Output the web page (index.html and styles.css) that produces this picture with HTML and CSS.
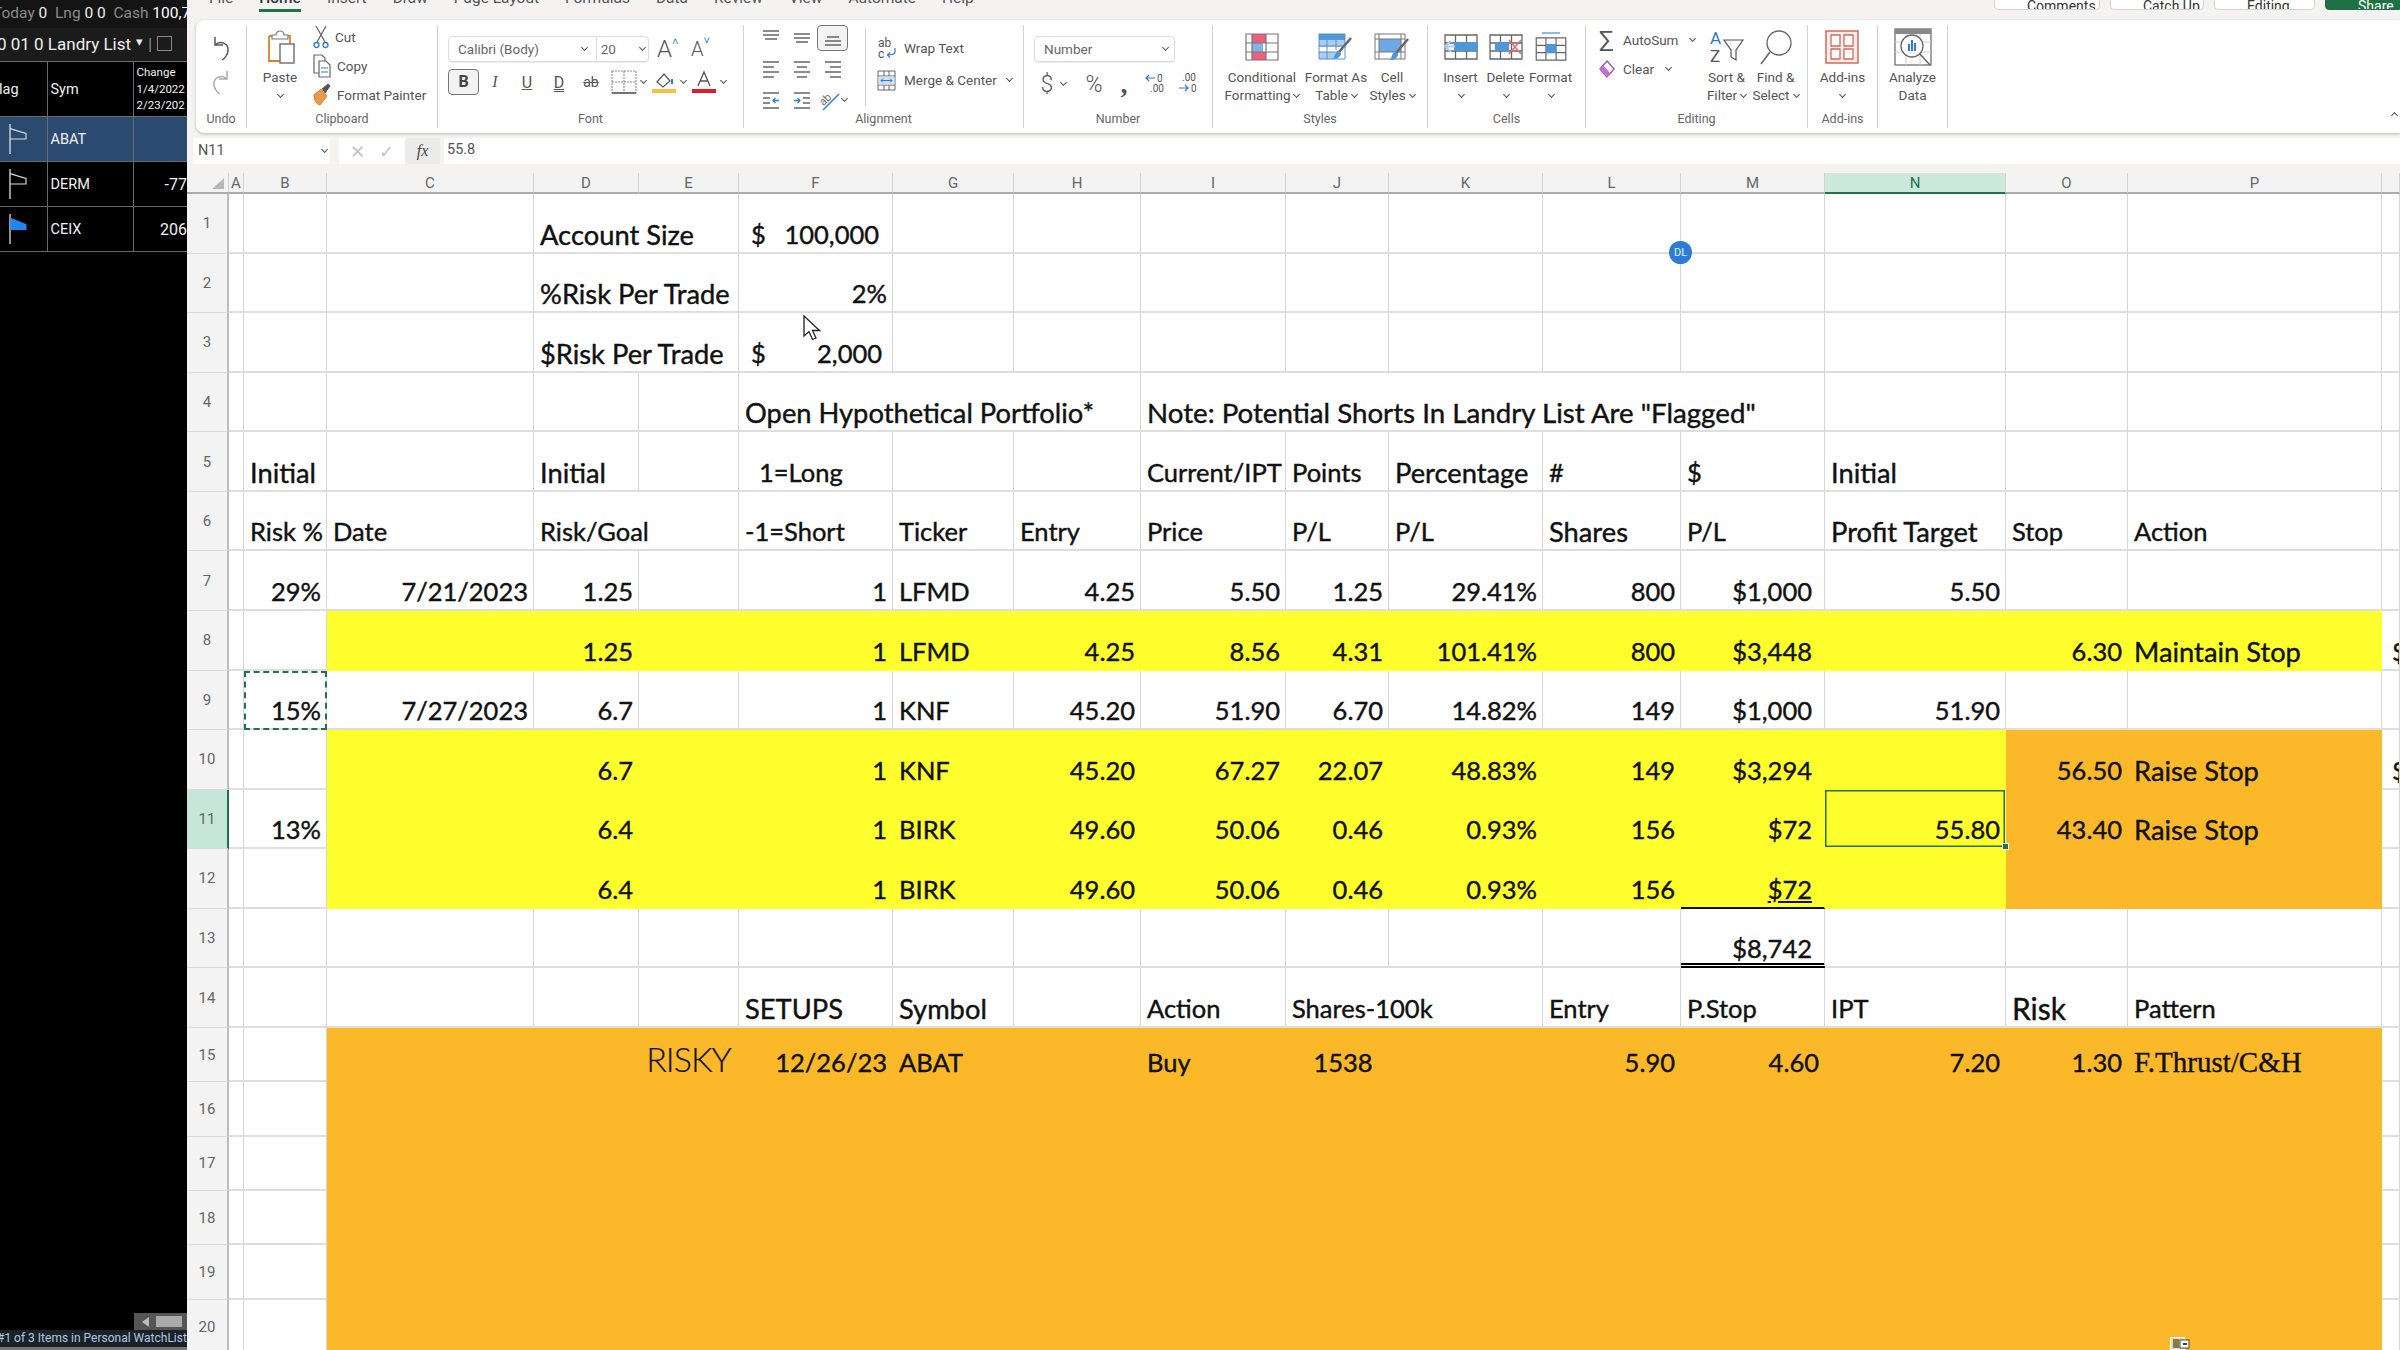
FILE: index.html
```html
<!DOCTYPE html>
<html lang="en">
<head>
  <meta charset="UTF-8" />
  <title>Landry List - Excel</title>
  <link rel="stylesheet" href="styles.css">
</head>
<body>
  <svg class="defs" width="0" height="0">
    <symbol id="flag" viewBox="0 0 20 34"><path d="M1.5 1v32" stroke="#ddd" stroke-width="1.4" fill="none"/><path d="M1.5 6l17 5v6h-17" stroke="#ddd" stroke-width="1.2" fill="none"/></symbol>
    <symbol id="al-top" viewBox="0 0 20 20"><path d="M2 3h16M2 7h16M4 11h12" stroke="#666" stroke-width="1.3"/></symbol>
    <symbol id="al-mid" viewBox="0 0 20 20"><path d="M2 6h16M2 10h16M4 14h12" stroke="#666" stroke-width="1.3"/></symbol>
    <symbol id="al-bot" viewBox="0 0 20 20"><path d="M4 9h12M2 13h16M2 17h16" stroke="#666" stroke-width="1.3"/></symbol>
    <symbol id="al-left" viewBox="0 0 20 20"><path d="M2 3h16M2 8h11M2 13h16M2 18h11" stroke="#666" stroke-width="1.3"/></symbol>
    <symbol id="al-center" viewBox="0 0 20 20"><path d="M2 3h16M5 8h10M2 13h16M5 18h10" stroke="#666" stroke-width="1.3"/></symbol>
    <symbol id="al-right" viewBox="0 0 20 20"><path d="M2 3h16M7 8h11M2 13h16M7 18h11" stroke="#666" stroke-width="1.3"/></symbol>
    <symbol id="ind-dec" viewBox="0 0 20 20"><path d="M2 3h16M2 8h7M2 13h7M2 18h16" stroke="#666" stroke-width="1.3"/><path d="M18 10.500h-6M14.500 8l-2.500 2.500 2.500 2.500" stroke="#2b7cd3" stroke-width="1.3" fill="none"/></symbol>
    <symbol id="ind-inc" viewBox="0 0 20 20"><path d="M2 3h16M11 8h7M11 13h7M2 18h16" stroke="#666" stroke-width="1.3"/><path d="M2 10.500h6M5.500 8l2.500 2.500-2.500 2.500" stroke="#2b7cd3" stroke-width="1.3" fill="none"/></symbol>
    <symbol id="sheet-grid" viewBox="0 0 34 26"><path d="M1 1h32v24h-32zM1 9h32M1 17h32M11.500 1v24M22.500 1v24" stroke="#666" stroke-width="1.3" fill="none"/></symbol>
  </svg>

  <aside class="watch">
    <div class="watch-stat"><span class="dim">Today</span> 0 &nbsp;<span class="dim">Lng</span> 0 0 &nbsp;<span class="dim">Cash</span> <b>100,7</b></div>
    <div class="watch-list">0 01 0 Landry List <span class="caret">▾</span> <span class="dim">|</span> <span class="box"></span></div>
    <table class="watch-table">
      <tr class="head"><td class="flagcol"><span class="cut">Flag</span></td><td class="symcol">Sym</td><td class="chg">Change<br>1/4/2022<br>2/23/202</td></tr>
      <tr class="on"><td class="flagcol"><svg class="flag"><use href="#flag"/></svg></td><td class="symcol">ABAT</td><td class="val"></td></tr>
      <tr><td class="flagcol"><svg class="flag"><use href="#flag"/></svg></td><td class="symcol">DERM</td><td class="val">-77</td></tr>
      <tr><td class="flagcol"><svg class="flag" viewBox="0 0 20 34"><path d="M1.500 1v32" stroke="#ddd" stroke-width="1.4"/><path d="M2 5l17 7v6h-17z" fill="#1e88f0"/></svg></td><td class="symcol">CEIX</td><td class="val">206</td></tr>
    </table>
    <div class="watch-foot">
      <div class="scroll"><i class="arrow"></i><i class="thumb"></i></div>
      <div class="status">#1 of 3 Items in Personal WatchList</div>
    </div>
  </aside>

  <main class="excel">
    <header class="tabs">
      <nav class="tablist">
        <span>File</span><span class="active">Home</span><span>Insert</span><span>Draw</span><span>Page Layout</span><span>Formulas</span><span>Data</span><span>Review</span><span>View</span><span>Automate</span><span>Help</span>
      </nav>
      <div class="tab-btns">
        <span class="tbtn w106">Comments</span><span class="tbtn w94">Catch Up</span><span class="tbtn w101">Editing</span><span class="tbtn share">Share</span>
      </div>
    </header>

    <section class="ribbon">
      <div class="group w-undo">
        <div class="body stack center">
          <svg width="22" height="28" viewBox="0 0 22 28"><path d="M5 3v8h8M5 11c5-5 14-2 13 6-.5 4-3 7-6 9" stroke="#555" stroke-width="1.500" fill="none"/></svg>
          <svg class="faded" width="22" height="28" viewBox="0 0 22 28"><path d="M17 3v8h-8M17 11c-5-5-14-2-13 6 .5 4 3 7 6 9" stroke="#aaa" stroke-width="1.500" fill="none"/></svg>
        </div>
        <div class="label">Undo</div>
      </div>

      <div class="group w-clip">
        <div class="body row">
          <div class="big w-paste">
            <svg width="32" height="36" viewBox="0 0 32 36"><path d="M8 6h4a4 4 0 0 1 8 0h4v4h-16z" fill="#fff" stroke="#777" stroke-width="1.200"/><path d="M5 7h3M24 7h2v8M20 32h-15v-25" stroke="#d9822b" stroke-width="1.800" fill="none"/><rect x="16" y="15" width="14" height="19" fill="#fff" stroke="#777" stroke-width="1.500"/></svg>
            <span>Paste</span><i class="chev"></i>
          </div>
          <div class="list clip-list">
            <div class="item"><svg width="16" height="24" viewBox="0 0 16 24"><path d="M3 1l9 16M13 1l-9 16" stroke="#666" stroke-width="1.300"/><circle cx="3.500" cy="20" r="2.500" fill="none" stroke="#2b7cd3" stroke-width="1.300"/><circle cx="12.500" cy="20" r="2.500" fill="none" stroke="#2b7cd3" stroke-width="1.300"/></svg>Cut</div>
            <div class="item"><svg width="18" height="24" viewBox="0 0 18 24"><path d="M1 1h8l3 3v15h-11z" fill="#fff" stroke="#666" stroke-width="1.200"/><path d="M6 7h7l4 4v12h-11z" fill="#fff" stroke="#666" stroke-width="1.200"/><path d="M8 14h7M8 18h7" stroke="#2b7cd3"/></svg>Copy</div>
            <div class="item"><svg width="18" height="24" viewBox="0 0 18 24"><path d="M1 12l7-6 6 7-7 9c-4-1-6-5-6-10z" fill="#e89a4f" stroke="#d9822b"/><path d="M9 6l6-5 2 2-5 7" fill="#555" stroke="#555"/></svg>Format Painter</div>
          </div>
        </div>
        <div class="label">Clipboard</div>
      </div>

      <div class="group w-font">
        <div class="body stack pad-font">
          <div class="row aligned">
            <div class="combo w-fontbox"><span class="cname">Calibri (Body)</span><i class="chev"></i><span class="csep"></span><span class="csize">20</span><i class="chev"></i></div>
            <span class="grow">A<sup>˄</sup></span><span class="shrink">A<sup>˅</sup></span>
          </div>
          <div class="row aligned tools">
            <span class="tool bold-btn">B</span><span class="tool ital">I</span><span class="tool under">U</span><span class="tool dunder">D</span><span class="tool strike">ab</span>
            <svg class="tool-svg" width="26" height="24" viewBox="0 0 26 24"><path d="M1 1h24v22h-24zM13 1v22M1 12h24" stroke="#888" stroke-width="1.100" stroke-dasharray="2 1" fill="none"/><path d="M1 23h24" stroke="#555" stroke-width="1.500"/></svg><i class="chev"></i>
            <svg class="tool-svg fill-ic" width="26" height="24" viewBox="0 0 26 24"><path d="M6 12l7-8 6 7-7 6z" fill="#fff" stroke="#555" stroke-width="1.200"/><path d="M21 9v5" stroke="#2b7cd3" stroke-width="2"/><rect x="1" y="19" width="24" height="4" fill="#f5c142"/></svg><i class="chev"></i>
            <svg class="tool-svg fill-ic" width="26" height="24" viewBox="0 0 26 24"><path d="M7 16l6-14 6 14M9.500 11h7" stroke="#555" stroke-width="1.300" fill="none"/><rect x="1" y="19" width="24" height="4" fill="#e01b2f"/></svg><i class="chev"></i>
          </div>
        </div>
        <div class="label">Font</div>
      </div>

      <div class="group w-align">
        <div class="body row">
          <div class="align-grid">
            <span class="agi"><svg width="20" height="20"><use href="#al-top"/></svg></span>
            <span class="agi"><svg width="20" height="20"><use href="#al-mid"/></svg></span>
            <span class="agi sel-btn"><svg width="20" height="20"><use href="#al-bot"/></svg></span>
            <span class="agi"><svg width="20" height="20"><use href="#al-left"/></svg></span>
            <span class="agi"><svg width="20" height="20"><use href="#al-center"/></svg></span>
            <span class="agi"><svg width="20" height="20"><use href="#al-right"/></svg></span>
            <span class="agi"><svg width="20" height="20"><use href="#ind-dec"/></svg></span>
            <span class="agi"><svg width="20" height="20"><use href="#ind-inc"/></svg></span>
            <span class="agi"><svg width="22" height="24" viewBox="0 0 22 24"><text x="1" y="14" font-size="11" fill="#666" transform="rotate(-45 8 12)" font-family="Roboto, sans-serif">ab</text><path d="M4 22L20 6" stroke="#2b7cd3" stroke-width="1.400"/></svg><i class="chev"></i></span>
          </div>
          <div class="vline"></div>
          <div class="list wide">
            <div class="item"><svg width="22" height="24" viewBox="0 0 22 24"><text x="2" y="11" font-size="12" fill="#555" font-family="Roboto, sans-serif">ab</text><text x="2" y="22" font-size="12" fill="#555" font-family="Roboto, sans-serif">c</text><path d="M19 12v4c0 3-5 3-7 3M14 16.500l-2.500 2.500 2.500 2.500" stroke="#2b7cd3" stroke-width="1.200" fill="none"/></svg>Wrap Text</div>
            <div class="item"><svg width="22" height="24" viewBox="0 0 22 24"><path d="M2 3h17v19h-17zM2 8h17M2 17h17M8 3v5M13 3v5M8 17v5M13 17v5" stroke="#666" fill="none"/><rect x="2.500" y="8.500" width="16" height="8" fill="#cfe3f7"/><path d="M5 12.500h11M7 10.500l-2 2 2 2M14 10.500l2 2-2 2" stroke="#2b7cd3" fill="none"/></svg>Merge &amp; Center <i class="chev"></i></div>
          </div>
        </div>
        <div class="label">Alignment</div>
      </div>

      <div class="group w-num">
        <div class="body stack pad-font">
          <div class="combo w-numbox"><span class="cname">Number</span><i class="chev"></i></div>
          <div class="row aligned num-tools">
            <span class="nt w-dollar">$</span><i class="chev"></i><span class="nt w-pct">%</span><span class="nt w-comma">,</span>
            <span class="nt dec-btn"><svg width="26" height="24" viewBox="0 0 26 24"><path d="M11 7h-9M5 4l-3 3 3 3" stroke="#2b7cd3" stroke-width="1.200" fill="none"/><text x="13" y="11" font-size="10" fill="#555" font-family="Roboto, sans-serif">0</text><text x="6" y="21" font-size="10" fill="#555" font-family="Roboto, sans-serif">.00</text></svg></span>
            <span class="nt dec-btn"><svg width="26" height="24" viewBox="0 0 26 24"><text x="6" y="10" font-size="10" fill="#555" font-family="Roboto, sans-serif">.00</text><path d="M3 17h9M9 14l3 3-3 3" stroke="#2b7cd3" stroke-width="1.200" fill="none"/><text x="15" y="21" font-size="10" fill="#555" font-family="Roboto, sans-serif">0</text></svg></span>
          </div>
        </div>
        <div class="label">Number</div>
      </div>

      <div class="group w-styles">
        <div class="body row pad-big">
          <div class="big w78">
            <svg width="34" height="28" viewBox="0 0 34 28"><path d="M7 1h14v9h-14zM7 19h14v8h-14z" fill="#ef5f7d"/><rect x="7" y="10" width="11" height="9" fill="#7db4ea"/><path d="M1 1h32v26h-32zM1 10h32M1 19h32M7 1v26M21 1v26" stroke="#777" stroke-width="1.200" fill="none"/></svg>
            <span>Conditional</span><span>Formatting<i class="chev"></i></span>
          </div>
          <div class="big w70">
            <svg width="36" height="28" viewBox="0 0 36 28"><rect x="1" y="1" width="26" height="6" fill="#4f97dc"/><rect x="1" y="7" width="26" height="7" fill="#a9cdf2"/><rect x="1" y="19" width="16" height="7" fill="#a9cdf2"/><path d="M1 1h26v25h-26zM1 13h26M1 19h20M9 7v19M18 7v10" stroke="#5b8fc4" fill="none"/><path d="M33 5L21 19" stroke="#666" stroke-width="2.500"/><path d="M20 18c3 0 4 3 2 5-2 3-5 3-7 3 2-2 1-6 5-8z" fill="#4f97dc"/></svg>
            <span>Format As</span><span>Table<i class="chev"></i></span>
          </div>
          <div class="big w42">
            <svg width="36" height="28" viewBox="0 0 36 28"><rect x="5" y="6" width="22" height="13" fill="#6ea9e6"/><path d="M1 1h30v25h-30zM1 6h30M1 19h30M5 1v25M27 1v25" stroke="#777" fill="none"/><path d="M34 6L22 20" stroke="#666" stroke-width="2.500"/><path d="M21 19c3 0 4 3 2 5-2 3-5 3-7 3 2-2 1-6 5-8z" fill="#4f97dc"/></svg>
            <span>Cell</span><span>Styles<i class="chev"></i></span>
          </div>
        </div>
        <div class="label">Styles</div>
      </div>

      <div class="group w-cells">
        <div class="body row pad-big">
          <div class="big w45">
            <svg width="34" height="28" viewBox="0 0 34 28"><use href="#sheet-grid" width="34" height="26" y="1"/><rect x="10" y="9" width="24" height="9" fill="#4f97dc"/><path d="M11 13.500h-9M7 8l-6 5.500 6 5.500" stroke="#a9cdf2" stroke-width="1.800" fill="none"/></svg>
            <span>Insert</span><i class="chev"></i>
          </div>
          <div class="big w45">
            <svg width="34" height="28" viewBox="0 0 34 28"><use href="#sheet-grid" width="34" height="26" y="1"/><rect x="6" y="9" width="14" height="9" fill="#4f97dc"/><path d="M20 7l12 14M32 7l-12 14" stroke="#e9667b" stroke-width="1.500"/></svg>
            <span>Delete</span><i class="chev"></i>
          </div>
          <div class="big w45">
            <svg width="34" height="30" viewBox="0 0 34 30"><path d="M8 1h18" stroke="#4f97dc" stroke-width="1.300"/><use href="#sheet-grid" width="32" height="24" x="1" y="5"/><rect x="12" y="12" width="10" height="9" fill="#4f97dc"/></svg>
            <span>Format</span><i class="chev"></i>
          </div>
        </div>
        <div class="label">Cells</div>
      </div>

      <div class="group w-edit">
        <div class="body row pad-edit">
          <div class="list edit-list">
            <div class="item"><span class="sigma">∑</span>AutoSum <i class="chev"></i></div>
            <div class="item"><svg width="18" height="20" viewBox="0 0 18 20"><path d="M9 1l8 9-8 9-8-9z" fill="#fff" stroke="#a24bb5" stroke-width="1.400"/><path d="M1 10l4-4 8 9-4 4z" fill="#c071d1"/></svg>Clear <i class="chev"></i></div>
          </div>
          <div class="big w49">
            <svg width="36" height="36" viewBox="0 0 36 36"><text x="1" y="15" font-size="17" fill="#2b7cd3" font-family="Roboto, sans-serif">A</text><text x="1" y="33" font-size="17" fill="#555" font-family="Roboto, sans-serif">Z</text><path d="M15 11h19l-7 10v10l-5-3v-7z" fill="#fff" stroke="#555" stroke-width="1.200"/></svg>
            <span>Sort &amp;</span><span>Filter<i class="chev"></i></span>
          </div>
          <div class="big w49">
            <svg width="36" height="36" viewBox="0 0 36 36"><circle cx="21" cy="14" r="12" fill="none" stroke="#666" stroke-width="1.300"/><path d="M12 23L3 35" stroke="#666" stroke-width="1.500"/></svg>
            <span>Find &amp;</span><span>Select<i class="chev"></i></span>
          </div>
        </div>
        <div class="label">Editing</div>
      </div>

      <div class="group w-addin">
        <div class="body row centered">
          <div class="big">
            <svg width="34" height="36" viewBox="0 0 34 36"><rect x="1" y="2" width="32" height="32" fill="#fbeeec" stroke="#d9675a" stroke-width="1.500"/><path d="M6 6h9v11h-9zM19 6h9v11h-9zM6 20h9v10h-9zM19 20h9v10h-9z" fill="#fff" stroke="#d9675a" stroke-width="1.300"/></svg>
            <span>Add-ins</span><i class="chev"></i>
          </div>
        </div>
        <div class="label">Add-ins</div>
      </div>

      <div class="group w-addin">
        <div class="body row centered">
          <div class="big">
            <svg width="38" height="38" viewBox="0 0 38 38"><rect x="1" y="1" width="36" height="36" fill="#fff" stroke="#666" stroke-width="1.200"/><rect x="1" y="1" width="36" height="5" fill="#888"/><path d="M1 24h36M1 14h36M12 6v31M26 6v31" stroke="#ccc"/><circle cx="18" cy="18" r="11" fill="#fff" stroke="#666" stroke-width="1.300"/><path d="M14 16v7h2v-7zM17 12v11h2v-11zM20 15v8h2v-8z" fill="#2b7cd3"/><path d="M26 26l10 11" stroke="#666" stroke-width="1.500"/></svg>
            <span>Analyze</span><span>Data</span>
          </div>
        </div>
      </div>
      <i class="chev up collapse"></i>
    </section>

    <section class="formula">
      <div class="namebox">N11<i class="chev"></i></div>
      <div class="fbtns"><span class="fx-x">✕</span><span class="fx-c">✓</span></div>
      <div class="fx"><em>fx</em></div>
      <div class="finput">55.8</div>
    </section>

    <section class="sheet">
      <table class="grid">
        <colgroup>
          <col class="c-hdr"><col class="c-a"><col class="c-b"><col class="c-c"><col class="c-d"><col class="c-e"><col class="c-f"><col class="c-g"><col class="c-h"><col class="c-i"><col class="c-j"><col class="c-k"><col class="c-l"><col class="c-m"><col class="c-n"><col class="c-o"><col class="c-p"><col class="c-q">
        </colgroup>
        <tr class="cols">
          <th class="corner"><i class="tri"></i></th><th>A</th><th>B</th><th>C</th><th>D</th><th>E</th><th>F</th><th>G</th><th>H</th><th>I</th><th>J</th><th>K</th><th>L</th><th>M</th><th class="picked">N</th><th>O</th><th>P</th><th></th>
        </tr>
        <tr>
          <th>1</th><td></td><td></td><td></td><td colspan="2" class="x">Account Size</td><td class="acct"><div class="acct-in"><span>$</span><span>100,000</span></div></td><td></td><td></td><td></td><td></td><td></td><td></td><td></td><td></td><td></td><td></td><td></td>
        </tr>
        <tr>
          <th>2</th><td></td><td></td><td></td><td colspan="2" class="x">%Risk Per Trade</td><td class="n">2%</td><td></td><td></td><td></td><td></td><td></td><td></td><td></td><td></td><td></td><td></td><td></td>
        </tr>
        <tr>
          <th>3</th><td></td><td></td><td></td><td colspan="2" class="x">$Risk Per Trade</td><td class="acct"><div class="acct-in small"><span>$</span><span>2,000</span></div></td><td></td><td></td><td></td><td></td><td></td><td></td><td></td><td></td><td></td><td></td><td></td>
        </tr>
        <tr>
          <th>4</th><td></td><td></td><td></td><td></td><td></td><td colspan="3" class="x">Open Hypothetical Portfolio*</td><td colspan="5" class="x note">Note: Potential Shorts In Landry List Are "Flagged"</td><td></td><td></td><td></td><td></td>
        </tr>
        <tr>
          <th>5</th><td></td><td class="x">Initial</td><td></td><td class="x">Initial</td><td></td><td class="ind">1=Long</td><td></td><td></td><td>Current/IPT</td><td>Points</td><td class="x">Percentage</td><td>#</td><td>$</td><td class="x">Initial</td><td></td><td></td><td></td>
        </tr>
        <tr>
          <th>6</th><td></td><td>Risk %</td><td>Date</td><td colspan="2">Risk/Goal</td><td>-1=Short</td><td>Ticker</td><td>Entry</td><td>Price</td><td>P/L</td><td>P/L</td><td class="x">Shares</td><td>P/L</td><td class="x">Profit Target</td><td>Stop</td><td>Action</td><td></td>
        </tr>
        <tr>
          <th>7</th><td></td><td class="n">29%</td><td class="n">7/21/2023</td><td class="n">1.25</td><td></td><td class="n">1</td><td>LFMD</td><td class="n">4.25</td><td class="n">5.50</td><td class="n">1.25</td><td class="n">29.41%</td><td class="n">800</td><td class="n pl">$1,000</td><td class="n">5.50</td><td></td><td></td><td></td>
        </tr>
        <tr>
          <th>8</th><td></td><td></td><td class="y"></td><td class="y n">1.25</td><td class="y"></td><td class="y n">1</td><td class="y">LFMD</td><td class="y n">4.25</td><td class="y n">8.56</td><td class="y n">4.31</td><td class="y n">101.41%</td><td class="y n">800</td><td class="y n pl">$3,448</td><td class="y"></td><td class="y n">6.30</td><td class="y x">Maintain Stop</td><td class="q">$</td>
        </tr>
        <tr>
          <th>9</th><td></td><td class="n ants">15%</td><td class="n">7/27/2023</td><td class="n">6.7</td><td></td><td class="n">1</td><td>KNF</td><td class="n">45.20</td><td class="n">51.90</td><td class="n">6.70</td><td class="n">14.82%</td><td class="n">149</td><td class="n pl">$1,000</td><td class="n">51.90</td><td></td><td></td><td></td>
        </tr>
        <tr>
          <th>10</th><td></td><td></td><td class="y"></td><td class="y n">6.7</td><td class="y"></td><td class="y n">1</td><td class="y">KNF</td><td class="y n">45.20</td><td class="y n">67.27</td><td class="y n">22.07</td><td class="y n">48.83%</td><td class="y n">149</td><td class="y n pl">$3,294</td><td class="y"></td><td class="o n">56.50</td><td class="o x">Raise Stop</td><td class="q">$</td>
        </tr>
        <tr>
          <th class="picked-row">11</th><td></td><td class="n">13%</td><td class="y"></td><td class="y n">6.4</td><td class="y"></td><td class="y n">1</td><td class="y">BIRK</td><td class="y n">49.60</td><td class="y n">50.06</td><td class="y n">0.46</td><td class="y n">0.93%</td><td class="y n">156</td><td class="y n pl">$72</td><td class="y n active-cell">55.80<i class="handle"></i></td><td class="o n">43.40</td><td class="o x">Raise Stop</td><td></td>
        </tr>
        <tr>
          <th>12</th><td></td><td></td><td class="y"></td><td class="y n">6.4</td><td class="y"></td><td class="y n">1</td><td class="y">BIRK</td><td class="y n">49.60</td><td class="y n">50.06</td><td class="y n">0.46</td><td class="y n">0.93%</td><td class="y n">156</td><td class="y n pl under">$72</td><td class="y"></td><td class="o"></td><td class="o"></td><td></td>
        </tr>
        <tr>
          <th>13</th><td></td><td></td><td></td><td></td><td></td><td></td><td></td><td></td><td></td><td></td><td></td><td></td><td class="n pl total">$8,742</td><td></td><td></td><td></td><td></td>
        </tr>
        <tr>
          <th>14</th><td></td><td></td><td></td><td></td><td></td><td class="x">SETUPS</td><td class="x">Symbol</td><td></td><td>Action</td><td colspan="2">Shares-100k</td><td>Entry</td><td>P.Stop</td><td>IPT</td><td class="risk">Risk</td><td>Pattern</td><td></td>
        </tr>
        <tr class="low">
          <th>15</th><td></td><td></td><td class="o"></td><td class="o"></td><td class="o risky">RISKY</td><td class="o n">12/26/23</td><td class="o">ABAT</td><td class="o"></td><td class="o">Buy</td><td class="o mid">1538</td><td class="o"></td><td class="o n">5.90</td><td class="o n">4.60</td><td class="o n">7.20</td><td class="o n">1.30</td><td class="o serif">F.Thrust/C&amp;H</td><td></td>
        </tr>
        <tr class="low">
          <th>16</th><td></td><td></td><td class="o" colspan="14"></td><td></td>
        </tr>
        <tr class="low">
          <th>17</th><td></td><td></td><td class="o" colspan="14"></td><td></td>
        </tr>
        <tr class="low">
          <th>18</th><td></td><td></td><td class="o" colspan="14"></td><td></td>
        </tr>
        <tr class="low">
          <th>19</th><td></td><td></td><td class="o" colspan="14"></td><td></td>
        </tr>
        <tr class="low">
          <th>20</th><td></td><td></td><td class="o" colspan="14"></td><td></td>
        </tr>
      </table>

      <span class="presence">DL</span>
      <svg class="cursor" width="18" height="26" viewBox="0 0 18 26"><path d="M1 1v20l5-4.500 3.500 8 3.500-1.500-3.500-7.500h7z" fill="#fff" stroke="#222" stroke-width="1.300"/></svg>
      <svg class="paste-opt" width="20" height="13" viewBox="0 0 20 13"><rect x="0.500" y="0.500" width="14" height="12" fill="#e8d9a8" stroke="#fff"/><path d="M3 2h6v9h-6z" fill="#8a7a4a"/><rect x="10" y="3" width="9" height="8" fill="#fff" stroke="#444"/><rect x="13" y="6" width="4" height="2" fill="#445"/></svg>
    </section>
  </main>
</body>
</html>
```

FILE: styles.css
```css
* {
  box-sizing: border-box;
}
html, body {
  margin: 0;
  height: 100%;
}
body {
  width: 2400px;
  height: 1350px;
  overflow: hidden;
  display: flex;
  font-family: Roboto, "Liberation Sans", sans-serif;
  background: #000;
}
.defs {
  position: absolute;
}

/* chevron used all over the ribbon */
.chev {
  display: inline-block;
  width: 5px;
  height: 5px;
  border-right: 1.3px solid #555;
  border-bottom: 1.3px solid #555;
  transform: rotate(45deg);
  margin: 0 3px 3px 4px;
  flex: none;
}
.chev.up {
  transform: rotate(225deg);
}

/* watchlist panel */
.watch {
  width: 187px;
  flex: none;
  height: 1350px;
  background: #000;
  color: #eee;
  display: flex;
  flex-direction: column;
  overflow: hidden;
  font-size: 15px;
}
.watch-stat {
  height: 28px;
  margin-left: -7px;
  padding-top: 4px;
  white-space: nowrap;
  background: #141414;
  font-size: 15.500px;
}
.watch-stat b {
  font-weight: 400;
  color: #fff;
}
.dim {
  color: #8a8a8a;
}
.watch-list {
  height: 33px;
  padding-top: 6px;
  margin-left: -3px;
  background: #1b1b1b;
  white-space: nowrap;
  font-size: 17px;
  display: flex;
  gap: 5px;
  align-items: flex-start;
}
.caret {
  font-size: 13px;
}
.box {
  width: 15px;
  height: 15px;
  margin-top: 2px;
  border: 1px solid #888;
  flex: none;
}
.watch-table {
  width: 187px;
  table-layout: fixed;
  border-collapse: collapse;
  font-size: 14.500px;
}
.watch-table td {
  border: 1.500px solid #6a6a6a;
  border-left: none;
  height: 45px;
  padding: 0 0 0 3px;
  overflow: hidden;
  white-space: nowrap;
  color: #f2f2f2;
}
.watch-table td:last-child {
  border-right: none;
}
.watch-table .head td {
  height: 55px;
}
.flagcol {
  width: 47px;
}
.symcol {
  width: 86px;
}
.cut {
  display: block;
  margin-left: -12px;
}
.chg {
  font-size: 11.500px;
  line-height: 16.500px;
}
.val {
  text-align: right;
  font-size: 16px;
}
.on td {
  background: #2b4a6f;
}
.flag {
  display: block;
  width: 20px;
  height: 32px;
  margin-left: 5px;
}
.watch-foot {
  margin-top: auto;
  flex: none;
}
.scroll {
  height: 17px;
  margin-left: 134px;
  background: #555;
  display: flex;
  align-items: center;
}
.arrow {
  border: 5px solid transparent;
  border-right: 7px solid #bbb;
  margin-left: 3px;
}
.thumb {
  width: 26px;
  height: 11px;
  margin-left: 7px;
  background: #aaa;
}
.status {
  height: 20px;
  padding-top: 1px;
  font-size: 12px;
  white-space: nowrap;
  color: #a9c9e6;
  background: #1c2126;
  margin-left: -3px;
  border-bottom: 3px solid #777;
}

/* excel */
.excel {
  flex: 1;
  min-width: 0;
  height: 1350px;
  background: #f4f3f2;
  display: flex;
  flex-direction: column;
}
.tabs {
  height: 20px;
  flex: none;
  display: flex;
  justify-content: space-between;
  overflow: hidden;
}
.tablist {
  display: flex;
  gap: 26px;
  padding-left: 22px;
  height: 12px;
  font-size: 15.500px;
  color: #555;
  line-height: 16px;
  white-space: nowrap;
}
.tablist span {
  margin-top: -10px;
  height: 22px;
}
.tablist .active {
  color: #333;
  font-weight: 500;
  border-bottom: 3px solid #217346;
}
.tab-btns {
  display: flex;
  gap: 10px;
  height: 10px;
}
.tbtn {
  background: #fff;
  border: 1px solid #d4d4d4;
  border-radius: 0 0 4px 4px;
  font-size: 14px;
  line-height: 6px;
  margin-top: -1px;
  padding: 0 0 0 32px;
  overflow: hidden;
  color: #333;
  display: flex;
  align-items: flex-end;
}
.w106 { width: 106px; }
.w94 { width: 94px; }
.w101 { width: 101px; }
.share {
  width: 75px;
  background: #1e7145;
  border-color: #1e7145;
  color: #fff;
  border-radius: 0 0 0 4px;
}

.ribbon {
  height: 113px;
  flex: none;
  margin-left: 9px;
  background: #fff;
  border-radius: 8px 0 0 8px;
  box-shadow: 0 1px 3px rgba(0,0,0,0.25);
  display: flex;
  align-items: flex-start;
  padding-top: 5px;
  font-size: 13.500px;
  color: #555;
  position: relative;
}
.group {
  height: 103px;
  flex: none;
  border-right: 1.500px solid #d2d2d2;
  display: flex;
  flex-direction: column;
}
.w-undo { width: 51px; }
.w-clip { width: 191px; }
.w-font { width: 306px; }
.w-align { width: 280px; }
.w-num { width: 189px; }
.w-styles { width: 215px; }
.w-cells { width: 158px; }
.w-edit { width: 222px; }
.w-addin { width: 70px; }
.body {
  flex: 1;
  min-height: 0;
}
.label {
  height: 17px;
  line-height: 15px;
  text-align: center;
  font-size: 12.500px;
  color: #666;
}
.stack {
  display: flex;
  flex-direction: column;
}
.center {
  align-items: center;
  padding-top: 9px;
  gap: 6px;
}
.row {
  display: flex;
}
.aligned {
  align-items: center;
}
.centered {
  justify-content: center;
}
.big {
  display: flex;
  flex-direction: column;
  align-items: center;
  white-space: nowrap;
  line-height: 18px;
  flex: none;
}
.group .big svg {
  height: 38px;
  flex: none;
  margin: 3px 0 2px;
}
.big .chev {
  margin-top: 6px;
}
.big span .chev {
  margin: 0 0 3px 4px;
}
.w-paste {
  width: 60px;
  margin-left: 3px;
}
.w78 { width: 78px; }
.w70 { width: 70px; }
.w42 { width: 42px; }
.w45 { width: 45px; }
.w49 { width: 49px; }
.pad-big {
  padding-left: 10px;
}
.list {
  display: flex;
  flex-direction: column;
  gap: 6px;
  margin-left: 4px;
}
.clip-list {
  margin-left: 3px;
  gap: 5px;
}
.item {
  display: flex;
  align-items: center;
  gap: 6px;
  height: 24px;
  white-space: nowrap;
}
.pad-font {
  padding: 11px 0 0 10px;
  gap: 7px;
}
.combo {
  height: 26px;
  background: #fff;
  border: 1px solid #dcdcdc;
  border-radius: 4px;
  box-shadow: 0 1px 1px rgba(0,0,0,0.08);
  display: flex;
  align-items: center;
  padding-left: 9px;
  color: #666;
}
.w-fontbox { width: 201px; }
.w-numbox { width: 141px; justify-content: space-between; padding-right: 3px; }
.cname {
  width: 122px;
}
.w-numbox .cname {
  width: auto;
}
.csep {
  width: 1px;
  height: 24px;
  background: #dcdcdc;
  margin: 0 4px 0 6px;
}
.csize {
  width: 36px;
}
.grow, .shrink {
  color: #555;
  font-size: 24px;
  line-height: 24px;
  margin-left: 8px;
  width: 26px;
  font-weight: 300;
}
.shrink {
  font-size: 20px;
  margin-left: 8px;
}
.grow sup, .shrink sup {
  font-size: 11px;
  color: #2b7cd3;
  line-height: 0;
  vertical-align: 12px;
}
.tools {
  height: 26px;
}
.tool {
  width: 32px;
  text-align: center;
  font-size: 16px;
  color: #555;
  flex: none;
}
.bold-btn {
  width: 31px;
  height: 26px;
  line-height: 24px;
  font-weight: 700;
  border: 1px solid #777;
  border-radius: 4px;
  background: #f3f3f3;
  color: #444;
}
.ital {
  font-style: italic;
  font-family: "Liberation Serif", serif;
}
.under {
  text-decoration: underline;
}
.dunder {
  text-decoration: underline double;
}
.strike {
  text-decoration: line-through;
  font-size: 14px;
}
.tool-svg {
  margin-left: 4px;
  flex: none;
}
.fill-ic {
  margin-left: 2px;
}

.align-grid {
  width: 116px;
  display: grid;
  grid-template-columns: repeat(3, 31px);
  grid-auto-rows: 26px;
  row-gap: 5px;
  padding-left: 11px;
}
.agi {
  display: flex;
  align-items: center;
  justify-content: center;
  white-space: nowrap;
}
.agi .chev {
  margin: 0 0 3px 1px;
}
.sel-btn {
  border: 1px solid #777;
  border-radius: 4px;
  background: #f3f3f3;
}
.vline {
  width: 1px;
  height: 78px;
  background: #d2d2d2;
  margin: 3px 0 0 5px;
}
.wide {
  margin-left: 10px;
  padding-top: 11px;
  gap: 8px;
}
.num-tools {
  height: 30px;
  margin-left: 3px;
}
.nt {
  color: #555;
  text-align: center;
  flex: none;
}
.w-dollar {
  width: 20px;
  font-size: 23px;
  font-weight: 300;
}
.w-pct {
  width: 28px;
  font-size: 23px;
  font-weight: 300;
  margin-left: 11px;
}
.w-comma {
  width: 32px;
  font-size: 28px;
  line-height: 14px;
  font-weight: 700;
  font-family: "Liberation Serif", serif;
}
.dec-btn {
  width: 31px;
  margin-left: 1px;
}
.pad-edit {
  padding-left: 9px;
}
.edit-list {
  width: 103px;
  margin-left: 4px;
  padding-top: 3px;
  gap: 5px;
}
.edit-list .item {
  gap: 8px;
}
.sigma {
  font-size: 24px;
  width: 16px;
  color: #555;
}
.edit-list .item svg {
  width: 16px;
}
.collapse {
  position: absolute;
  right: 0;
  top: 93px;
}

/* formula bar */
.formula {
  height: 26px;
  margin: 5px 0 0 6px;
  flex: none;
  display: flex;
  font-size: 14.500px;
  color: #555;
}
.namebox {
  width: 137px;
  background: #fff;
  border-radius: 2px;
  padding-left: 5px;
  line-height: 26px;
  display: flex;
  justify-content: space-between;
  align-items: center;
  margin-right: 9px;
}
.fbtns {
  width: 66px;
  background: #fff;
  display: flex;
  justify-content: space-around;
  align-items: center;
  color: #c4c4c4;
  font-size: 18px;
  padding: 0 4px;
}
.fx {
  width: 35px;
  margin-right: 4px;
  background: #ececec;
  text-align: center;
  line-height: 25px;
  font-family: "Liberation Serif", serif;
  font-size: 16px;
  color: #444;
}
.finput {
  flex: 1;
  background: #fff;
  padding-left: 3px;
  line-height: 24px;
}

/* sheet */
.sheet {
  margin-top: 9px;
  position: relative;
  flex: 1;
  min-height: 0;
  background: #fff;
}
.grid {
  width: 2213px;
  table-layout: fixed;
  border-collapse: separate;
  border-spacing: 0;
  font-family: Lato, "Liberation Sans", sans-serif;
  font-size: 25.500px;
  color: #111;
}
.c-hdr { width: 42px; }
.c-a { width: 15px; }
.c-b { width: 83px; }
.c-c { width: 207px; }
.c-d { width: 105px; }
.c-e { width: 100px; }
.c-f { width: 154px; }
.c-g { width: 121px; }
.c-h { width: 127px; }
.c-i { width: 145px; }
.c-j { width: 103px; }
.c-k { width: 154px; }
.c-l { width: 138px; }
.c-m { width: 144px; }
.c-n { width: 181px; }
.c-o { width: 122px; }
.c-p { width: 254px; }
.c-q { width: 18px; }

.grid th {
  background: #f3f3f3;
  font-family: Roboto, sans-serif;
  font-weight: 400;
  font-size: 15px;
  color: #666;
  padding: 0;
  border-right: 2px solid #bdbdbd;
  border-bottom: 1px solid #dcdcdc;
  height: 59.570px;
}
.grid .cols th {
  height: 21px;
  border-right: 1px solid #d4d4d4;
  border-bottom: 2px solid #ababab;
}
.corner {
  position: relative;
}
.tri {
  position: absolute;
  left: 25px;
  top: 5px;
  border-style: solid;
  border-width: 0 0 11px 12px;
  border-color: transparent transparent #b8b8b8 transparent;
}
.grid .cols .picked {
  background: #cde8dc;
  border-bottom-color: #217346;
  color: #217346;
}
.grid .picked-row {
  background: #c5e6d8;
  border-right-color: #217346;
}
.grid td {
  height: 59.570px;
  padding: 0 6px 2px 6px;
  vertical-align: bottom;
  white-space: nowrap;
  overflow: hidden;
  line-height: 31px;
  border-right: 1px solid #d6d6d6;
  border-bottom: 2px solid #dedede;
  -webkit-text-stroke: 0.4px #111;
}
.grid .low th, .grid .low td {
  height: 54.400px;
}
.grid td.x {
  font-size: 27.300px;
}
.grid td.note {
  font-size: 27.700px;
}
.grid td.n {
  text-align: right;
  padding-right: 5px;
}
.grid td.pl {
  padding-right: 12px;
}
.grid td.y {
  background: #ffff2e;
  border-color: #ffff2e;
}
.grid td.o {
  background: #fbb829;
  border-color: #fbb829;
}
.grid td.q {
  padding-left: 10px;
  padding-right: 0;
}
.ind {
  padding-left: 20px !important;
}
.acct-in {
  display: flex;
  justify-content: space-between;
  padding: 0 7px 0 6px;
}
.acct-in.small {
  padding-right: 4px;
}
.grid td.ants {
  outline: 2px dashed #217346;
  outline-offset: -2px;
}
.grid td.active-cell {
  position: relative;
  overflow: visible;
  box-shadow: inset 0 0 0 1.500px #217346;
}
.handle {
  position: absolute;
  right: -4px;
  bottom: -3px;
  width: 7px;
  height: 7px;
  background: #217346;
  border: 1px solid #fff;
}
.grid td.under {
  border-bottom: 2px solid #111;
}
.grid td.total {
  border-bottom: 5px double #000;
  padding-bottom: 0;
  line-height: 29px;
}
.grid td.risk {
  font-size: 30px;
}
.grid td.mid {
  text-align: center;
  padding-left: 18px;
}
.grid td.risky {
  font-size: 34px;
  font-weight: 300;
  letter-spacing: -1px;
  text-align: center;
  padding: 0 0 6px;
  -webkit-text-stroke: 0.2px #111;
}
.grid td.serif {
  font-family: "Liberation Serif", serif;
  font-size: 29px;
}

.presence {
  position: absolute;
  left: 1482px;
  top: 68px;
  width: 23px;
  height: 23px;
  border-radius: 50%;
  background: #2b7cd3;
  color: #e8f2fc;
  font-size: 11px;
  line-height: 23px;
  text-align: center;
}
.cursor {
  position: absolute;
  left: 616px;
  top: 142px;
}
.paste-opt {
  position: absolute;
  left: 1983px;
  top: 1164px;
}
```
